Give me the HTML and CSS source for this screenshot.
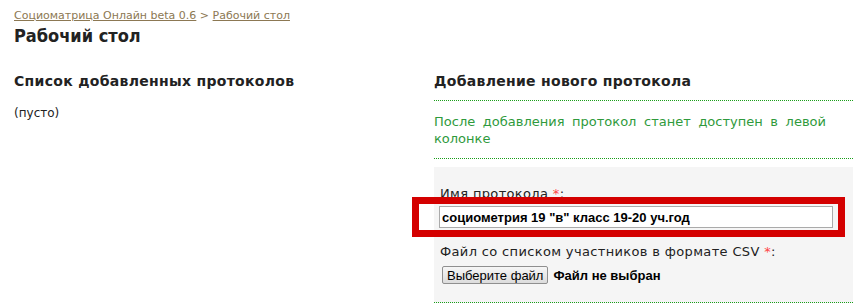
FILE: index.html
```html
<!DOCTYPE html>
<html lang="ru">
<head>
  <meta charset="UTF-8" />
  <title>Рабочий стол | Социоматрица Онлайн</title>
  <link rel="stylesheet" href="styles.css">
</head>
<body>
  <div class="crumbs">
    <a href="#">Социоматрица Онлайн beta 0.6</a> &gt; <a href="#">Рабочий стол</a>
  </div>
  <h1>Рабочий стол</h1>

  <main class="columns">
    <section class="col-left">
      <h2>Список добавленных протоколов</h2>
      <p class="empty">(пусто)</p>
    </section>

    <section class="col-right">
      <h2>Добавление нового протокола</h2>
      <p class="hint">После добавления протокол станет доступен в левой колонке</p>

      <form class="add-form">
        <div class="field field-name">
          <label for="name">Имя протокола <span class="req">*</span>:</label>
          <input id="name" type="text" value='социометрия 19 "в" класс 19-20 уч.год' />
          <div class="mark"></div>
        </div>
        <div class="field">
          <label>Файл со списком участников в формате CSV <span class="req">*</span>:</label>
          <div class="file-row">
            <button type="button" class="file-btn">Выберите файл</button>
            <span class="file-name">Файл не выбран</span>
          </div>
        </div>
      </form>
    </section>
  </main>
</body>
</html>
```

FILE: styles.css
```css
body {
  margin: 0;
  padding: 0 0 0 14px;
  font-family: 'DejaVu Sans', Verdana, sans-serif;
  font-size: 12px;
  color: #222;
  background: #fff;
  overflow: hidden;
}

.crumbs {
  padding-top: 9px;
  font-size: 11px;
  line-height: 14px;
  color: #8c7853;
}

.crumbs a { color: #8c7853; }

h1 {
  margin: 2px 0 0;
  font-family: 'DejaVu Sans Condensed', 'DejaVu Sans', sans-serif;
  font-size: 18px;
  line-height: 22px;
}

.columns {
  display: grid;
  grid-template-columns: 420px 1fr;
  margin-top: 24px;
}

h2 {
  margin: 0;
  font-size: 14px;
  line-height: 20px;
  letter-spacing: 0.3px;
}

.empty {
  margin: 14px 0 0;
  line-height: 16px;
}

.hint {
  margin: 9px 0 0;
  padding: 12px 27px 11px 0;
  border-top: 1px dotted #1a9f1a;
  border-bottom: 1px dotted #1a9f1a;
  font-size: 13px;
  line-height: 17px;
  color: #2f9a3c;
  text-align: justify;
}

.add-form {
  margin-top: 8px;
  padding: 18px 0 18px 5px;
  background: #f5f5f5;
  border-bottom: 1px dotted #1a9f1a;
}

.field label {
  display: block;
  font-size: 13px;
  line-height: 17px;
  padding-left: 1px;
  letter-spacing: 0.35px;
}

.req { color: #f44; }

.field-name {
  position: relative;
  margin-bottom: 15px;
}

.field-name input {
  display: block;
  box-sizing: border-box;
  width: 394px;
  height: 22px;
  margin-top: 4px;
  padding: 1px 2px;
  border: 1px solid #aaa;
  background: #fff;
  font-family: 'Liberation Sans', Arial, sans-serif;
  font-size: 13px;
  font-weight: bold;
  color: #000;
}

.mark {
  position: absolute;
  left: -27px;
  top: 12px;
  width: 433px;
  height: 40px;
  box-sizing: border-box;
  border: 7px solid #d40000;
}

.file-row {
  display: flex;
  align-items: center;
  gap: 5px;
  margin-top: 6px;
  padding-left: 3px;
}

.file-btn {
  height: 18px;
  padding: 0 4px;
  border: 1px solid #8f8f8f;
  border-radius: 2px;
  background: linear-gradient(#f6f6f6, #dcdcdc);
  font-family: 'Liberation Sans', Arial, sans-serif;
  font-size: 13px;
  color: #000;
}

.file-name {
  font-family: 'Liberation Sans', Arial, sans-serif;
  font-size: 13px;
  font-weight: bold;
  color: #000;
}
```
